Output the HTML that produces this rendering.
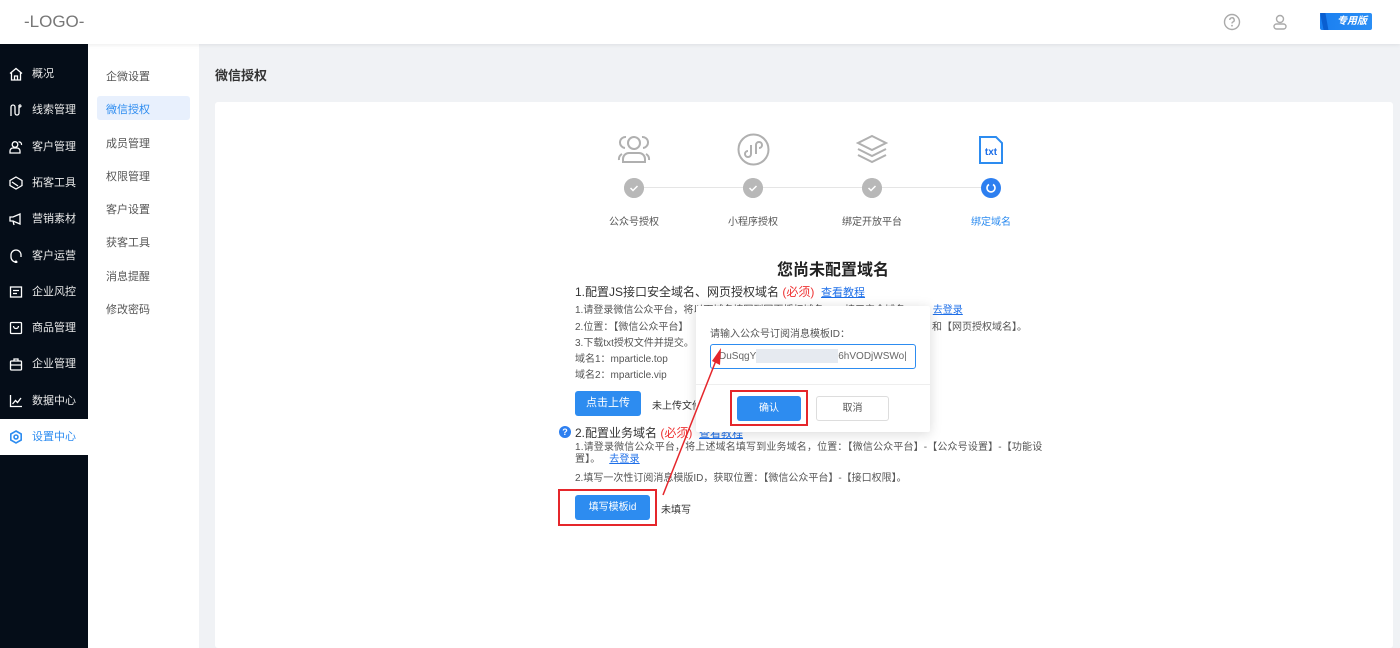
<!DOCTYPE html>
<html><head><meta charset="utf-8"><style>
*{margin:0;padding:0;box-sizing:border-box}
body{width:1400px;height:648px;overflow:hidden;font-family:"Liberation Sans","Noto Sans CJK SC",sans-serif;background:#f0f2f5;position:relative;color:#333}
.abs{position:absolute}
.hdr{left:0;top:0;width:1400px;height:44px;background:#fff;box-shadow:0 1px 4px rgba(0,0,0,.08);z-index:2}
.side{left:0;top:44px;width:88px;height:604px;background:#050d18}
.si{position:absolute;left:0;width:88px;height:36px;color:#e8e8e8;font-size:11px;line-height:36px;padding-left:32px}
.si svg{position:absolute;left:9px;top:11px}
.sub{left:88px;top:44px;width:111px;height:604px;background:#fff}
.sb{position:absolute;left:18px;font-size:11px;color:#555}
.card{left:215px;top:102px;width:1178px;height:546px;background:#fff;border-radius:3px}
.t{font-size:10px;color:#555}
a{color:#1e6fe8;text-decoration:underline}
.btn{background:#2d8cf0;color:#fff;font-size:11px;text-align:center;border-radius:3px}
.step{font-size:10px;color:#555;text-align:center;width:100px}
.ck{width:20px;height:20px;border-radius:50%;background:#b8b8b8}
</style></head><body>
<div class="abs hdr">
 <div class="abs" style="left:24px;top:12px;font-size:17px;color:#777">-LOGO-</div>
 <svg class="abs" style="left:1223px;top:13px" width="18" height="18" viewBox="0 0 18 18"><circle cx="9" cy="9" r="7.5" fill="none" stroke="#aaa" stroke-width="1.4"/><path d="M6.8 7a2.2 2.2 0 1 1 3 2c-.7.3-.8.8-.8 1.5" fill="none" stroke="#aaa" stroke-width="1.4"/><circle cx="9" cy="12.7" r=".9" fill="#aaa"/></svg>
 <svg class="abs" style="left:1271px;top:13px" width="18" height="18" viewBox="0 0 18 18"><circle cx="9" cy="6" r="3.5" fill="none" stroke="#aaa" stroke-width="1.4"/><rect x="3" y="11" width="12" height="5" rx="2.5" fill="none" stroke="#aaa" stroke-width="1.4"/></svg>
 <div class="abs" style="left:1320px;top:13px;width:52px;height:17px;background:linear-gradient(90deg,#1a7ff0,#2a8ef5);border-radius:2px;color:#fff;font-size:10px;font-weight:bold;line-height:17px;padding-left:17px;font-style:italic">专用版</div>
 <div class="abs" style="left:1320px;top:13px;width:12px;height:17px;background:#0a5fd0;clip-path:polygon(0 0,45% 0,70% 100%,30% 100%)"></div>
</div>
<div class="abs side"></div>
<div class="abs" style="left:0;top:419px;width:88px;height:36px;background:#fff"></div>
<div class="si" style="top:56px"><svg width="14" height="14" viewBox="0 0 14 14" fill="none" stroke="#fff" stroke-width="1.3"><path d="M1 6.5L7 1.5l6 5M2.5 5.5V13h9V5.5M5.5 13V9h3v4"/></svg>概况</div>
<div class="si" style="top:92px"><svg width="14" height="14" viewBox="0 0 14 14" fill="none" stroke="#fff" stroke-width="1.3"><path d="M2 13V4a2 2 0 0 1 4 0v6a2 2 0 0 0 4 0V2M12 3a1 1 0 1 1 0-.1"/></svg>线索管理</div>
<div class="si" style="top:129px"><svg width="14" height="14" viewBox="0 0 14 14" fill="none" stroke="#fff" stroke-width="1.3"><circle cx="6" cy="4.5" r="2.8"/><path d="M1 13v-2a3 3 0 0 1 3-3h4a3 3 0 0 1 3 3v2zM9.5 2a2.5 2.5 0 0 1 3 3"/></svg>客户管理</div>
<div class="si" style="top:165px"><svg width="14" height="14" viewBox="0 0 14 14" fill="none" stroke="#fff" stroke-width="1.3"><path d="M7 1l6 3.5v5L7 13 1 9.5v-5zM3 6l6 4"/></svg>拓客工具</div>
<div class="si" style="top:201px"><svg width="14" height="14" viewBox="0 0 14 14" fill="none" stroke="#fff" stroke-width="1.3"><path d="M1 5h3l7-3v10L4 9H1zM4 9l1 4"/></svg>营销素材</div>
<div class="si" style="top:238px"><svg width="14" height="14" viewBox="0 0 14 14" fill="none" stroke="#fff" stroke-width="1.3"><path d="M2 6a5 5 0 0 1 10 0v2M2 6v2a5 5 0 0 0 5 5"/><circle cx="7" cy="13" r=".8"/></svg>客户运营</div>
<div class="si" style="top:274px"><svg width="14" height="14" viewBox="0 0 14 14" fill="none" stroke="#fff" stroke-width="1.3"><rect x="1.5" y="2" width="11" height="10"/><path d="M4 5.5h6M4 8.5h4"/></svg>企业风控</div>
<div class="si" style="top:310px"><svg width="14" height="14" viewBox="0 0 14 14" fill="none" stroke="#fff" stroke-width="1.3"><rect x="1.5" y="1.5" width="11" height="11" rx="1"/><path d="M4.5 5a2.5 2.5 0 0 0 5 0"/></svg>商品管理</div>
<div class="si" style="top:346px"><svg width="14" height="14" viewBox="0 0 14 14" fill="none" stroke="#fff" stroke-width="1.3"><rect x="1.5" y="4" width="11" height="9" rx="1"/><path d="M5 4V2h4v2M1.5 8h11"/></svg>企业管理</div>
<div class="si" style="top:383px"><svg width="14" height="14" viewBox="0 0 14 14" fill="none" stroke="#fff" stroke-width="1.3"><path d="M1.5 1v11.5H13M3.5 10l3-3.5 2 2L12 4"/></svg>数据中心</div>
<div class="si" style="top:419px;color:#2d8cf0"><svg width="14" height="14" viewBox="0 0 14 14" fill="none" stroke="#2d8cf0" stroke-width="1.6"><path d="M7 1l5.2 3v6L7 13 1.8 10V4z"/><circle cx="7" cy="7" r="2"/></svg>设置中心</div>
<div class="abs sub">
 <div class="sb" style="top:24px">企微设置</div>
 <div style="position:absolute;left:9px;top:52px;width:93px;height:24px;background:#e8f0fd;border-radius:3px"></div>
 <div class="sb" style="top:57px;color:#2d8cf0">微信授权</div>
 <div class="sb" style="top:91px">成员管理</div>
 <div class="sb" style="top:124px">权限管理</div>
 <div class="sb" style="top:157px">客户设置</div>
 <div class="sb" style="top:190px">获客工具</div>
 <div class="sb" style="top:224px">消息提醒</div>
 <div class="sb" style="top:257px">修改密码</div>
</div>
<div class="abs" style="left:215px;top:65px;font-size:13px;font-weight:bold;color:#333">微信授权</div>
<div class="abs card"></div>
<div class="abs" style="left:634px;top:187px;width:356px;height:1px;background:#e5e5e5"></div>
<svg class="abs" style="left:617px;top:134px" width="34" height="30" viewBox="0 0 34 30" fill="none" stroke="#b0b0b0" stroke-width="2"><circle cx="17" cy="9" r="6"/><path d="M6 28v-3a6 6 0 0 1 6-6h10a6 6 0 0 1 6 6v3zM8 14a5 5 0 0 1 1-11M26 14a5 5 0 0 0-1-11M2 26a6 6 0 0 1 3-6M32 26a6 6 0 0 0-3-6"/></svg>
<svg class="abs" style="left:737px;top:133px" width="33" height="33" viewBox="0 0 33 33" fill="none" stroke="#b0b0b0" stroke-width="2"><circle cx="16.5" cy="16.5" r="15"/><path d="M14 12v9a3 3 0 1 1-3-3M19 21v-9a3 3 0 1 1 3 3"/></svg>
<svg class="abs" style="left:856px;top:134px" width="32" height="30" viewBox="0 0 32 30" fill="none" stroke="#b0b0b0" stroke-width="2"><path d="M16 2l14 7-14 7L2 9z M2 15l14 7 14-7 M2 21l14 7 14-7"/></svg>
<svg class="abs" style="left:978px;top:135px" width="26" height="30" viewBox="0 0 26 30"><path d="M2 2h16l6 6v20H2z" fill="#fff" stroke="#2d8cf0" stroke-width="2"/><text x="13" y="20" font-size="10" font-weight="bold" fill="#1e6fe8" text-anchor="middle" font-family="Liberation Sans">txt</text></svg>
<svg class="abs ck" style="left:624px;top:178px" viewBox="0 0 20 20"><circle cx="10" cy="10" r="10" fill="#b8b8b8"/><path d="M6.5 10l2.5 2.5 4.5-4.5" stroke="#fff" stroke-width="1.5" fill="none"/></svg>
<svg class="abs ck" style="left:743px;top:178px" viewBox="0 0 20 20"><circle cx="10" cy="10" r="10" fill="#b8b8b8"/><path d="M6.5 10l2.5 2.5 4.5-4.5" stroke="#fff" stroke-width="1.5" fill="none"/></svg>
<svg class="abs ck" style="left:862px;top:178px" viewBox="0 0 20 20"><circle cx="10" cy="10" r="10" fill="#b8b8b8"/><path d="M6.5 10l2.5 2.5 4.5-4.5" stroke="#fff" stroke-width="1.5" fill="none"/></svg>
<svg class="abs" style="left:981px;top:178px" width="20" height="20" viewBox="0 0 20 20"><circle cx="10" cy="10" r="10" fill="#2d7ff0"/><path d="M8 6.5A4 4 0 1 0 12 6.5" stroke="#fff" stroke-width="1.6" fill="none"/></svg>
<div class="abs step" style="left:584px;top:213px">公众号授权</div>
<div class="abs step" style="left:703px;top:213px">小程序授权</div>
<div class="abs step" style="left:822px;top:213px">绑定开放平台</div>
<div class="abs step" style="left:941px;top:213px;color:#2d8cf0">绑定域名</div>
<div class="abs" style="left:777px;top:256px;font-size:16px;font-weight:bold;color:#222">您尚未配置域名</div>
<div class="abs" style="left:575px;top:283px;font-size:12px;color:#333">1.配置JS接口安全域名、网页授权域名 <span style="color:#e33">(必须)</span> &nbsp;<a style="font-size:11px">查看教程</a></div>
<div class="abs t" style="left:575px;top:301px">1.请登录微信公众平台，将以下域名填写到网页授权域名、JS接口安全域名 &nbsp;&nbsp;&nbsp;&nbsp;&nbsp;&nbsp;&nbsp;&nbsp;&nbsp;<a>去登录</a></div>
<div class="abs t" style="left:575px;top:318px">2.位置：【微信公众平台】</div>
<div class="abs t" style="left:932px;top:318px">和【网页授权域名】。</div>
<div class="abs t" style="left:575px;top:334px">3.下载txt授权文件并提交。</div>
<div class="abs t" style="left:575px;top:350px">域名1：mparticle.top</div>
<div class="abs t" style="left:575px;top:366px">域名2：mparticle.vip</div>
<div class="abs btn" style="left:575px;top:391px;width:66px;height:25px;line-height:25px">点击上传</div>
<div class="abs" style="left:652px;top:397px;font-size:10px;color:#333">未上传文件</div>
<div class="abs" style="left:559px;top:426px;width:12px;height:12px;border-radius:50%;background:#2d7ff0;color:#fff;font-size:9px;font-weight:bold;text-align:center;line-height:12px">?</div>
<div class="abs" style="left:575px;top:424px;font-size:12px;color:#333">2.配置业务域名 <span style="color:#e33">(必须)</span> &nbsp;<a style="font-size:11px">查看教程</a></div>
<div class="abs t" style="left:575px;top:442px;width:482px;line-height:12px;letter-spacing:.15px">1.请登录微信公众平台，将上述域名填写到业务域名，位置：【微信公众平台】-【公众号设置】-【功能设置】。 &nbsp;&nbsp;<a>去登录</a></div>
<div class="abs t" style="left:575px;top:469px">2.填写一次性订阅消息模版ID，获取位置：【微信公众平台】-【接口权限】。</div>
<div class="abs" style="left:558px;top:489px;width:99px;height:37px;border:2px solid #e5262b"></div>
<div class="abs btn" style="left:575px;top:495px;width:75px;height:25px;line-height:25px;font-size:10px">填写模板id</div>
<div class="abs" style="left:661px;top:501px;font-size:10px;color:#333">未填写</div>
<div class="abs" style="left:696px;top:306px;width:234px;height:126px;background:#fff;box-shadow:0 2px 12px rgba(0,0,0,.15);border-radius:2px">
 <div class="abs t" style="left:14px;top:19px">请输入公众号订阅消息模板ID：</div>
 <div class="abs" style="left:14px;top:38px;width:206px;height:25px;border:1px solid #2d8cf0;border-radius:3px;font-size:10px;color:#666;line-height:23px;padding-left:8px">DuSqgY<span style="display:inline-block;width:82px;height:14px;background:#e6eaf0;vertical-align:middle"></span>6hVODjWSWo|</div>
 <div class="abs" style="left:0;top:78px;width:234px;height:1px;background:#eee"></div>
 <div class="abs" style="left:34px;top:84px;width:78px;height:36px;border:2px solid #e5262b"></div>
 <div class="abs btn" style="left:41px;top:90px;width:64px;height:25px;line-height:25px;font-size:10px">确认</div>
 <div class="abs" style="left:120px;top:90px;width:73px;height:25px;border:1px solid #ddd;border-radius:3px;font-size:10px;text-align:center;line-height:23px;color:#555">取消</div>
</div>
<svg class="abs" style="left:655px;top:340px" width="80" height="160" viewBox="0 0 80 160"><path d="M8 155L62 18" stroke="#e5262b" stroke-width="1.5" fill="none"/><path d="M66 8l-1 17-8-4z" fill="#e5262b"/></svg>
</body></html>
